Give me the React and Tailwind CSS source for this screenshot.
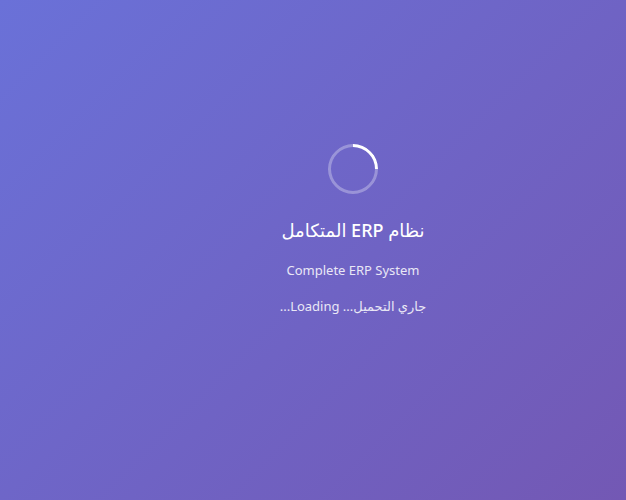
export default function App() {
  return (
    <div
      dir="rtl"
      className="min-h-screen w-full flex items-center justify-center bg-[linear-gradient(135deg,#6a71d8_0%,#7358b4_100%)] text-white"
      style={{ fontFamily: '"Noto Sans", "DejaVu Sans", sans-serif' }}
    >
      <div className="flex flex-col items-center text-center mr-[-80px] mb-[40px]">
        <div className="w-[50px] h-[50px] rounded-full border-[3px] border-white/30 border-t-white rotate-45 mb-[23px]" />
        <h2 className="text-[18px] font-medium leading-normal mb-[17px]">نظام ERP المتكامل</h2>
        <p className="text-[13px] opacity-85 mb-[17px]">Complete ERP System</p>
        <p className="text-[13px] opacity-85">جاري التحميل... Loading...</p>
      </div>
    </div>
  );
}
